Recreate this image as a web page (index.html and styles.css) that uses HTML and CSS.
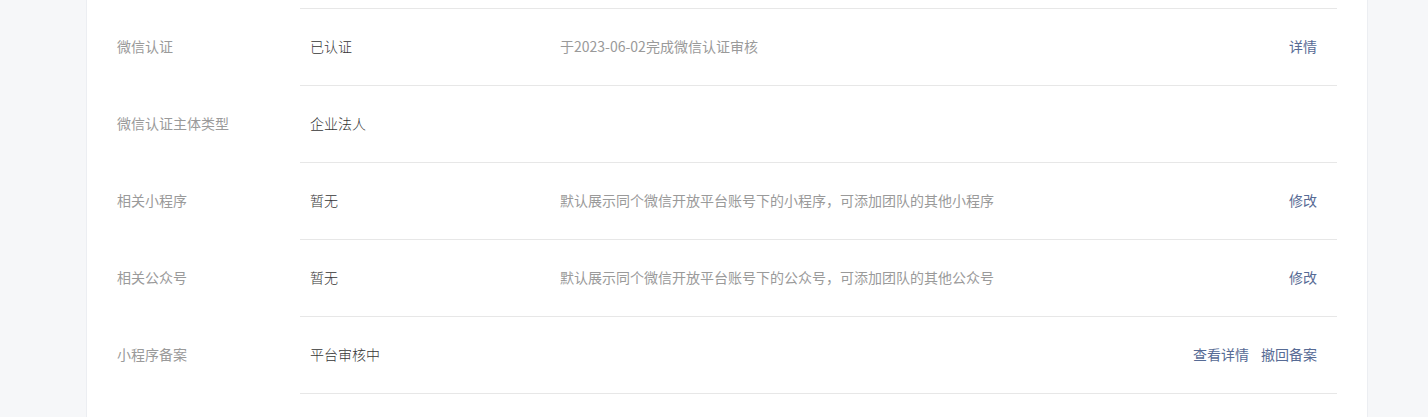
FILE: index.html
```html
<!DOCTYPE html>
<html lang="zh-CN">
<head>
    <meta charset="UTF-8">
    <meta name="viewport" content="width=device-width, initial-scale=1.0">
    <title>基本设置</title>
    <link rel="stylesheet" href="styles.css">
</head>
<body>
    <div class="card">
        <!-- 账号信息 -->
        <div class="info-list">
            <div class="info-row">
                <div class="info-label">微信认证</div>
                <div class="info-cell">
                    <div class="info-value">已认证</div>
                    <div class="info-desc">于2023-06-02完成微信认证审核</div>
                    <div class="info-actions"><a href="#">详情</a></div>
                </div>
            </div>
            <div class="info-row">
                <div class="info-label">微信认证主体类型</div>
                <div class="info-cell">
                    <div class="info-value">企业法人</div>
                </div>
            </div>
            <div class="info-row">
                <div class="info-label">相关小程序</div>
                <div class="info-cell">
                    <div class="info-value">暂无</div>
                    <div class="info-desc">默认展示同个微信开放平台账号下的小程序，可添加团队的其他小程序</div>
                    <div class="info-actions"><a href="#">修改</a></div>
                </div>
            </div>
            <div class="info-row">
                <div class="info-label">相关公众号</div>
                <div class="info-cell">
                    <div class="info-value">暂无</div>
                    <div class="info-desc">默认展示同个微信开放平台账号下的公众号，可添加团队的其他公众号</div>
                    <div class="info-actions"><a href="#">修改</a></div>
                </div>
            </div>
            <div class="info-row">
                <div class="info-label">小程序备案</div>
                <div class="info-cell">
                    <div class="info-value">平台审核中</div>
                    <div class="info-actions">
                        <a href="#">查看详情</a>
                        <a href="#">撤回备案</a>
                    </div>
                </div>
            </div>
        </div>
    </div>
</body>
</html>
```

FILE: styles.css
```css
body {
    margin: 0;
    background-color: #f6f7f9;
    font-family: "Noto Sans CJK SC", "Noto Sans", sans-serif;
    font-size: 14px;
    color: #353535;
}
.card {
    width: 1282px;
    min-height: 417px;
    margin-left: 86px;
    padding: 8px 30px 0;
    box-sizing: border-box;
    background-color: #fff;
    border-left: 1px solid #eceef2;
    border-right: 1px solid #eceef2;
}
.info-row {
    display: flex;
    align-items: center;
}
.info-label {
    width: 183px;
    flex-shrink: 0;
    padding-bottom: 2px;
    color: #9a9a9a;
}
.info-cell {
    flex: 1;
    display: flex;
    align-items: center;
    height: 77px;
    padding: 0 20px 2px 10px;
    box-sizing: border-box;
    border-top: 1px solid #e7e7e7;
}
.info-row:last-child .info-cell {
    height: 78px;
    border-bottom: 1px solid #e7e7e7;
}
.info-value {
    width: 250px;
    flex-shrink: 0;
    font-weight: 300;
}
.info-desc {
    color: #9a9a9a;
}
.info-actions {
    margin-left: auto;
    display: flex;
    gap: 12px;
}
.info-actions a {
    color: #576b95;
    text-decoration: none;
}
```
